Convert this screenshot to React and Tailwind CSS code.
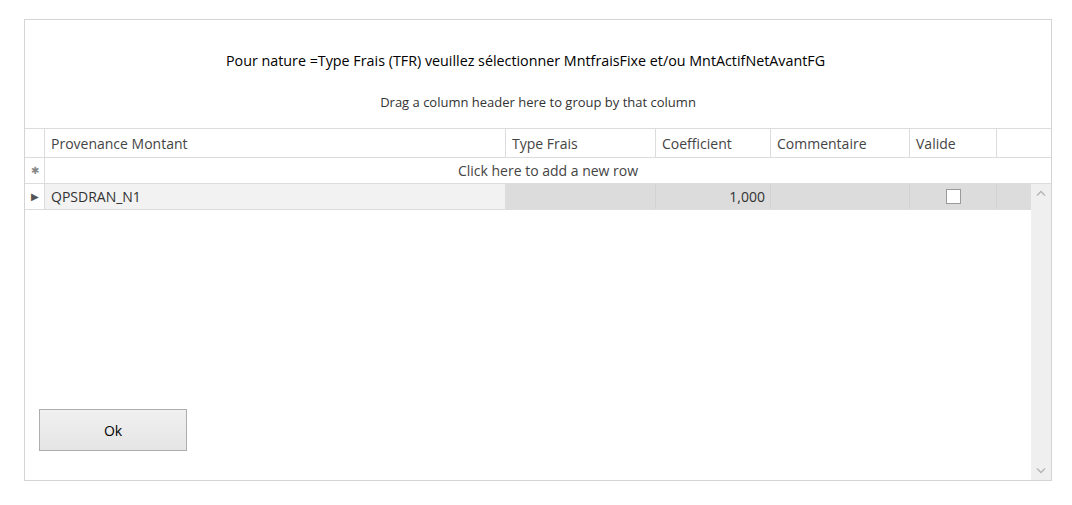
const columns = [
  { label: "Provenance Montant", width: "w-[461px]" },
  { label: "Type Frais", width: "w-[150px]" },
  { label: "Coefficient", width: "w-[115px]" },
  { label: "Commentaire", width: "w-[139px]" },
  { label: "Valide", width: "w-[87px]" },
];

const Chevron = ({ up }) => (
  <svg width="10" height="6" viewBox="0 0 10 6" className="text-[#b4b4b4]">
    <path
      d={up ? "M1 5.5 L5 1.5 L9 5.5" : "M1 0.5 L5 4.5 L9 0.5"}
      fill="none"
      stroke="currentColor"
      strokeWidth="1.3"
    />
  </svg>
);

const App = () => {
  return (
    <div
      className="w-[1072px] h-[505px] bg-white pt-[19px] pl-[24px]"
      style={{ fontFamily: '"Open Sans", "Noto Sans", sans-serif' }}
    >
      <div className="w-[1028px] h-[462px] border border-[#d4d4d4] flex flex-col">
        {/* message area */}
        <div className="h-[108px] flex flex-col items-center">
          <p className="mt-[31px] mr-[25px] text-[14.3px] text-black leading-[20px] whitespace-nowrap">
            Pour nature =Type Frais (TFR) veuillez sélectionner MntfraisFixe
            et/ou MntActifNetAvantFG
          </p>
          <p className="mt-[22px] text-[13px] text-[#333] leading-[18px] whitespace-nowrap">
            Drag a column header here to group by that column
          </p>
        </div>

        {/* header row */}
        <div className="flex h-[30px] border-t border-b border-[#dcdcdc] text-[14px] text-[#444]">
          <div className="w-[20px] border-r border-[#dcdcdc]" />
          {columns.map((col) => (
            <div
              key={col.label}
              className={`${col.width} shrink-0 border-r border-[#dcdcdc] pl-[6px] pt-[1px] flex items-center`}
            >
              {col.label}
            </div>
          ))}
          <div className="flex-1" />
        </div>

        {/* new row */}
        <div className="flex h-[26px] border-b border-[#dcdcdc]">
          <div className="w-[20px] border-r border-[#dcdcdc] flex items-center justify-center text-[10px] text-[#888]">
            ✱
          </div>
          <div className="flex-1 flex items-center justify-center text-[14px] text-[#444]">
            Click here to add a new row
          </div>
        </div>

        {/* body */}
        <div className="flex-1 flex">
          <div className="flex-1 flex flex-col">
            <div className="flex h-[26px] border-b border-[#dcdcdc] text-[14px] text-[#333]">
              <div className="w-[20px] border-r border-[#dcdcdc] flex items-center justify-center text-[10px] text-[#555]">
                ▶
              </div>
              <div className="w-[461px] shrink-0 bg-[#f2f2f2] border-r border-[#dcdcdc] pl-[6px] flex items-center">
                QPSDRAN_N1
              </div>
              <div className="w-[150px] shrink-0 bg-[#dcdcdc] border-r border-[#d2d2d2]" />
              <div className="w-[115px] shrink-0 bg-[#dcdcdc] border-r border-[#d2d2d2] pr-[5px] flex items-center justify-end">
                1,000
              </div>
              <div className="w-[139px] shrink-0 bg-[#dcdcdc] border-r border-[#d2d2d2]" />
              <div className="w-[87px] shrink-0 bg-[#dcdcdc] border-r border-[#d2d2d2] flex items-center justify-center">
                <div className="w-[15px] h-[15px] bg-white border border-[#9a9a9a]" />
              </div>
              <div className="flex-1 bg-[#dcdcdc]" />
            </div>
            <div className="flex-1 flex items-end pl-[14px] pb-[29px]">
              <button className="w-[148px] h-[42px] border border-[#adadad] bg-gradient-to-b from-[#f0f0f0] to-[#e5e5e5] text-[14px] text-black">
                Ok
              </button>
            </div>
          </div>
          <div className="w-[20px] bg-[#efefef] flex flex-col items-center justify-between py-[6px]">
            <Chevron up />
            <Chevron />
          </div>
        </div>
      </div>
    </div>
  );
};

export default App;
